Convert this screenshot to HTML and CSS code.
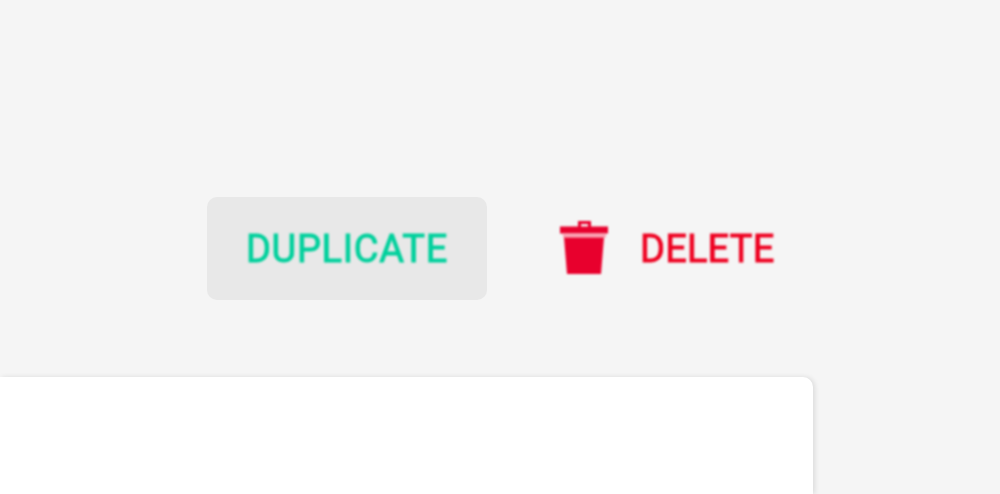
FILE: index.html
```html
<!DOCTYPE html>
<html lang="en">
<head>
    <meta charset="UTF-8">
    <title>Item actions</title>
    <link rel="stylesheet" href="styles.css">
</head>
<body>
    <div class="page">
        <div class="actions">
            <button class="btn-duplicate"><span>DUPLICATE</span></button>
            <button class="btn-delete">
                <svg class="trash-icon" viewBox="0 0 48 54" width="48" height="54">
                    <path fill="none" stroke="#e8002d" stroke-width="3" d="M19.500 7V2.500H29.500V7"/>
                    <path fill="#e8002d" d="M0 6.500H48V13.500H0Z"/>
                    <path fill="#f9a3b3" d="M3 13.500H46V17.500H3Z"/>
                    <path fill="#e8002d" d="M4 17.500H44L41 54H7Z"/>
                </svg>
                <span>DELETE</span>
            </button>
        </div>
        <div class="card"></div>
    </div>
</body>
</html>
```

FILE: styles.css
```css
html, body {
    margin: 0;
    padding: 0;
    height: 100%;
    overflow: hidden;
}

body {
    font-family: Roboto, Arial, sans-serif;
    background-color: #f5f5f5;
}

.page {
    width: 813px;
    padding-top: 197px;
}

.actions {
    display: flex;
    align-items: center;
    height: 103px;
    padding-left: 207px;
}

button {
    border: none;
    background: none;
    font-family: inherit;
    font-size: 38px;
    font-weight: 400;
    -webkit-text-stroke: 0.9px currentColor;
    padding: 0;
}

button span,
.trash-icon {
    display: block;
    filter: blur(0.8px);
}

.btn-duplicate {
    width: 280px;
    height: 103px;
    border-radius: 10px;
    background-color: #e8e8e8;
    color: #00d09c;
    letter-spacing: 0.7px;
}

.btn-delete {
    display: flex;
    align-items: center;
    gap: 32px;
    margin-left: 73px;
    color: #ee0020;
    letter-spacing: 0.2px;
}

.trash-icon {
    margin-bottom: 3px;
}

.card {
    height: 117px;
    margin-top: 77px;
    background-color: #ffffff;
    border-radius: 0 10px 0 0;
    box-shadow: 2px 0 5px rgba(0, 0, 0, 0.1);
}
```
